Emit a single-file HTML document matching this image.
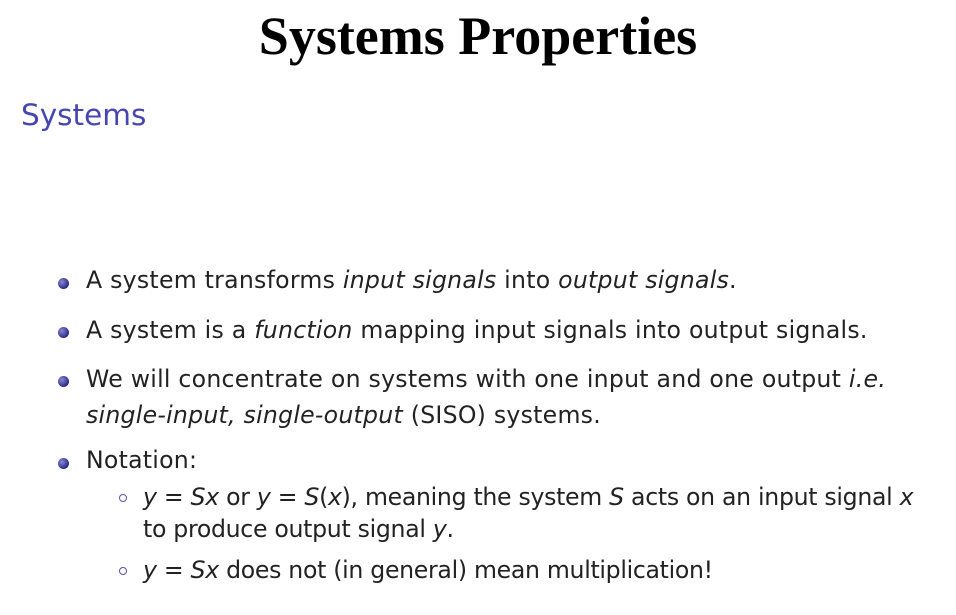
<!DOCTYPE html>
<html><head><meta charset="utf-8"><style>
body{margin:0;width:956px;height:615px;background:#fff;position:relative;overflow:hidden;font-family:"DejaVu Sans","Liberation Sans",sans-serif;color:#222}
.t{position:absolute;white-space:nowrap;line-height:1}
.b{font-size:23.6px;letter-spacing:0.25px}
.s{letter-spacing:-0.3px}
i{font-style:italic}
.dot{position:absolute;width:11px;height:11px;border-radius:50%;background:radial-gradient(circle at 35% 35%,#8888d8,#2a2a80 70%)}
.circ{position:absolute;width:6px;height:6px;border-radius:50%;border:1.3px solid #5555aa}
</style></head><body>
<div class="t" style="left:0;width:956px;text-align:center;top:9px;font-family:'Liberation Serif',serif;font-weight:bold;font-size:54px;color:#000">Systems Properties</div>
<div class="t" style="left:21px;top:101px;font-size:29.5px;color:#4646b0;font-family:'DejaVu Sans',sans-serif">Systems</div>

<div class="dot" style="left:58px;top:278px"></div>
<div class="t b" style="left:86px;top:269px">A system transforms <i>input signals</i> into <i>output signals</i>.</div>
<div class="dot" style="left:58px;top:327px"></div>
<div class="t b" style="left:86px;top:319px">A system is a <i>function</i> mapping input signals into output signals.</div>
<div class="dot" style="left:58px;top:376px"></div>
<div class="t b" style="left:86px;top:368px">We will concentrate on systems with one input and one output <i>i.e.</i></div>
<div class="t b" style="left:86px;top:404px"><i>single-input, single-output</i> (SISO) systems.</div>
<div class="dot" style="left:58px;top:458px"></div>
<div class="t b" style="left:86px;top:449px">Notation:</div>
<div class="circ" style="left:119px;top:494px"></div>
<div class="t b s" style="left:143px;top:486px"><i>y</i> = <i>Sx</i> or <i>y</i> = <i>S</i>(<i>x</i>), meaning the system <i>S</i> acts on an input signal <i>x</i></div>
<div class="t b s" style="left:143px;top:518px">to produce output signal <i>y</i>.</div>
<div class="circ" style="left:119px;top:567px"></div>
<div class="t b s" style="left:143px;top:559px"><i>y</i> = <i>Sx</i> does not (in general) mean multiplication!</div>
</body></html>
